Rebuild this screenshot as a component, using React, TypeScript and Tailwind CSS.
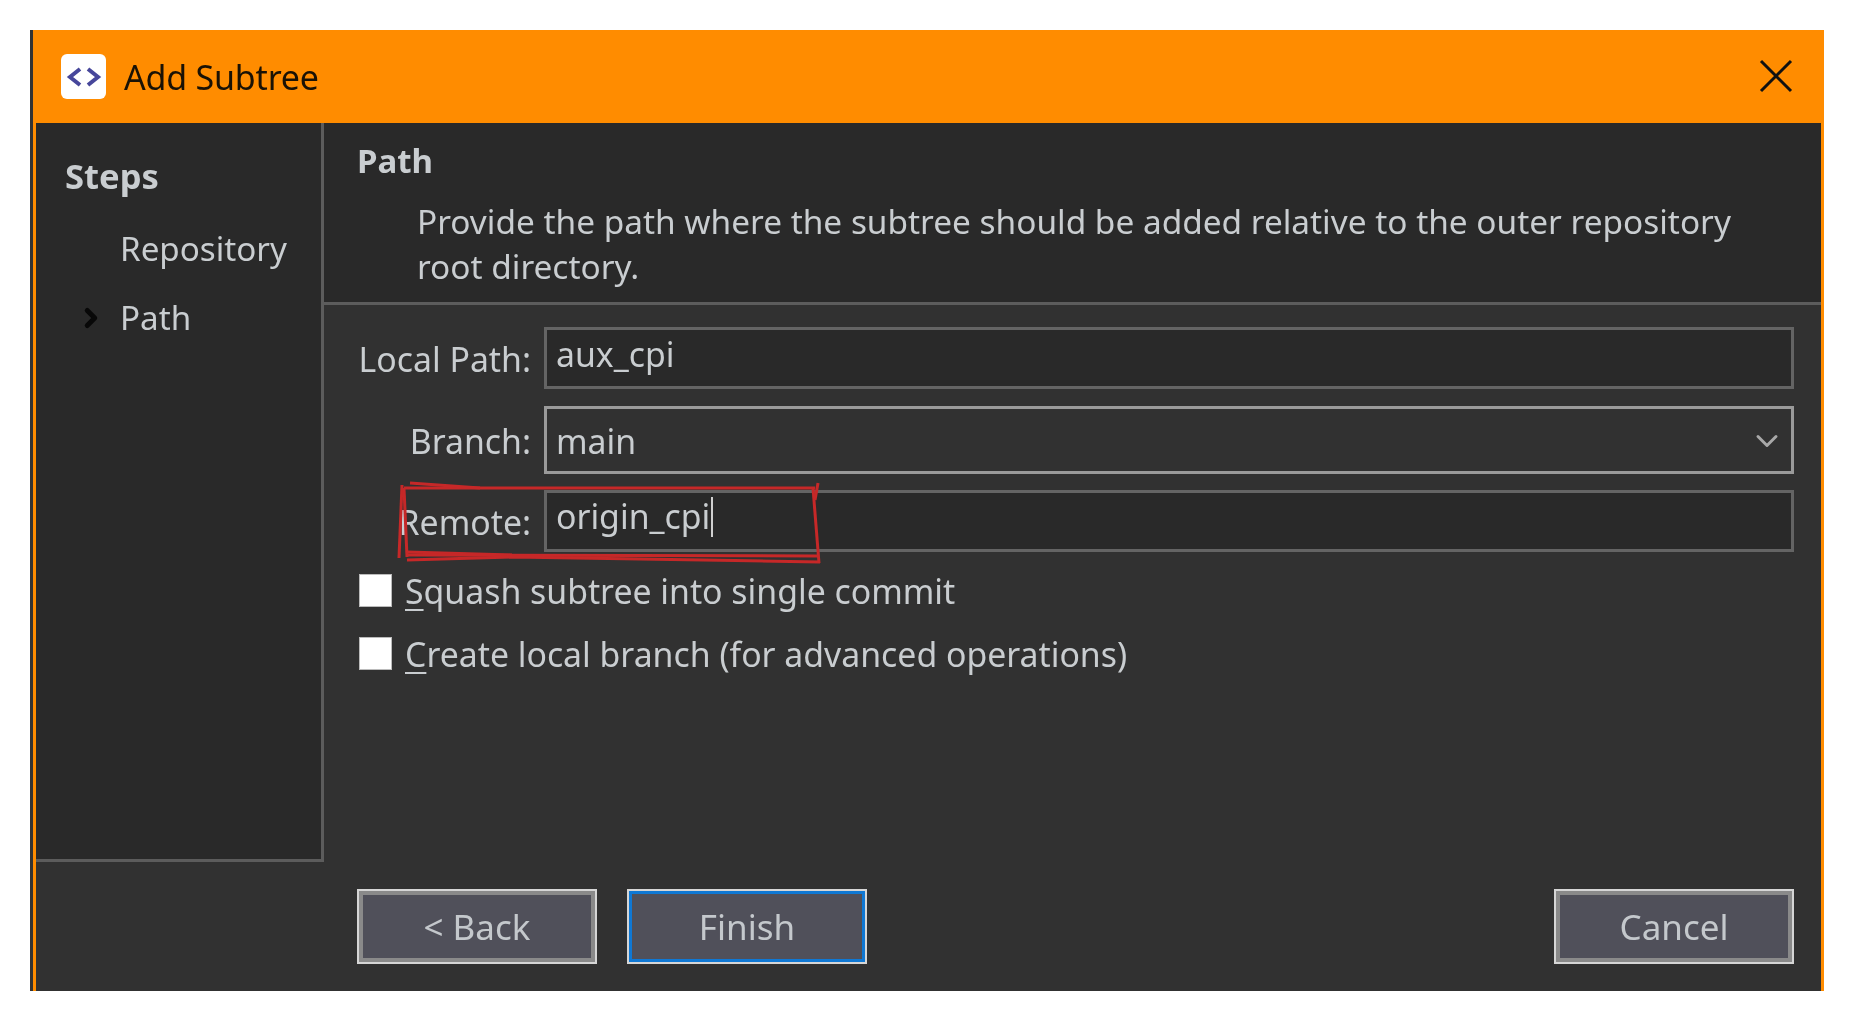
import { ChevronDown, ChevronRight } from 'lucide-react';

const font = 'font-["Noto_Sans","Open_Sans",sans-serif]';
const fieldText = 'text-[33.8px] leading-[44px] text-[#c9cdd0]';

const Field = ({ label, children }: { label: string; children: React.ReactNode }) => (
  <div className="flex items-center">
    <div className={`w-[220px] shrink-0 pr-[13px] pt-[2px] text-right ${fieldText}`}>{label}</div>
    {children}
  </div>
);

const Check = ({ mark, rest }: { mark: string; rest: string }) => (
  <div className="flex h-[33px] items-center gap-[13px]">
    <div className="h-[33px] w-[33px] bg-white border border-[#bbbbbb]" />
    <span className={fieldText}>
      <span className="underline underline-offset-[5px] decoration-2">{mark}</span>
      {rest}
    </span>
  </div>
);

const Btn = ({ label, focused }: { label: string; focused?: boolean }) => (
  <button
    className={`h-[75px] w-[240px] border-[2px] border-[#d6d6d6] bg-[#50505a] pt-[2px] text-[35px] text-[#c4c8cc] ${
      focused ? 'outline-[3px] -outline-offset-[5px] outline-[#0f78d4]' : 'outline-[4px] -outline-offset-[6px] outline-[#8a8a8a]'
    }`}
  >
    {label}
  </button>
);

export default function App() {
  return (
    <div className={`min-h-[1020px] bg-white pl-[30px] pt-[30px] ${font}`}>
      <div className="relative flex h-[961px] w-[1794px] flex-col border-l-[3px] border-l-[#333333] bg-[#ff8c00] blur-[0.5px]">
        {/* title bar */}
        <div className="flex h-[93px] shrink-0 items-center justify-between pl-[28px] pr-[31px]">
          <div className="flex items-center gap-[18px]">
            <div className="flex h-[45px] w-[45px] items-center justify-center rounded-[6px] bg-white">
              <svg width="36" height="24" viewBox="0 0 36 24" fill="none" stroke="#47479b" strokeWidth="4" strokeLinejoin="miter">
                <path d="M14 4 L4 12 L14 20" />
                <path d="M22 4 L32 12 L22 20" />
              </svg>
            </div>
            <span className="text-[34px] leading-[44px] tracking-[-0.2px] text-[#1a1205]">Add Subtree</span>
          </div>
          <svg width="34" height="34" viewBox="0 0 34 34" stroke="#111111" strokeWidth="3" className="mb-[2px]">
            <path d="M2 2 L32 32 M32 2 L2 32" />
          </svg>
        </div>

        {/* body */}
        <div className="ml-[3px] mr-[3px] flex min-h-0 flex-1 bg-[#313131]">
          <div className="w-[288px] shrink-0">
            <div className="h-[739px] border-b-[3px] border-r-[3px] border-[#5c5c5c] bg-[#292929] pl-[29px] pt-[31px]">
              <div className="text-[34.6px] font-bold leading-[44px] text-[#c9cdd0]">Steps</div>
              <div className="mt-[29px] pl-[55px] text-[33.2px] leading-[44px] text-[#c9cdd0]">Repository</div>
              <div className="relative mt-[25px] flex items-center">
                <ChevronRight size={30} strokeWidth={4} color="#080808" className="ml-[11px]" />
                <span className="ml-[14px] text-[33.2px] leading-[44px] text-[#c9cdd0]">Path</span>
              </div>
            </div>
          </div>

          <div className="flex min-w-0 flex-1 flex-col">
            <div className="h-[182px] shrink-0 border-b-[3px] border-[#5c5c5c] bg-[#292929] pl-[33px] pt-[16px]">
              <div className="text-[33px] font-bold leading-[44px] text-[#c9cdd0]">Path</div>
              <div className="mt-[16px] w-[1440px] pl-[60px] text-[33.4px] leading-[45px] text-[#c9cdd0]">
                Provide the path where the subtree should be added relative to the outer repository root directory.
              </div>
            </div>

            <div className="flex flex-col pr-[27px] pt-[22px]">
              <Field label="Local Path:">
                <div className={`h-[62px] flex-1 border-[3px] border-[#646464] bg-[#292929] pl-[9px] pt-[2px] ${fieldText}`}>aux_cpi</div>
              </Field>
              <div className="mt-[17px]">
                <Field label="Branch:">
                  <div className={`flex h-[68px] flex-1 items-center justify-between border-[3px] border-[#9a9a9a] pl-[9px] pr-[6px] pt-[1px] ${fieldText}`}>
                    main
                    <ChevronDown size={36} strokeWidth={2} color="#a8a8a8" />
                  </div>
                </Field>
              </div>
              <div className="mt-[16px]">
                <Field label="Remote:">
                  <div className={`flex h-[62px] flex-1 border-[3px] border-[#646464] bg-[#292929] pl-[9px] pt-[1px] ${fieldText}`}>
                    origin_cpi
                    <span className="ml-[1px] mt-[3px] h-[40px] w-[2px] bg-[#d0d0d0]" />
                  </div>
                </Field>
              </div>

              <div className="ml-[35px] mt-[22px] flex flex-col gap-[30px]">
                <Check mark="S" rest="quash subtree into single commit" />
                <Check mark="C" rest="reate local branch (for advanced operations)" />
              </div>
            </div>

            <div className="mt-auto flex items-center pb-[27px] pl-[33px] pr-[27px]">
              <Btn label="< Back" />
              <div className="ml-[30px]">
                <Btn label="Finish" focused />
              </div>
              <div className="ml-auto">
                <Btn label="Cancel" />
              </div>
            </div>
          </div>
        </div>

        {/* red pen annotation around the Remote row */}
        <svg className="absolute left-[363px] top-[450px]" width="430" height="90" viewBox="0 0 430 90" fill="none" stroke="#c62828" strokeWidth="3">
          <path d="M6 5 L3 78" />
          <path d="M8 8 L11 77" />
          <path d="M8 8 L419 8" />
          <path d="M14 3 L84 8" />
          <path d="M11 72 L116 75" />
          <path d="M11 75 L422 76" />
          <path d="M11 80 L117 77 L424 82" />
          <path d="M417 8 L423 83" />
          <path d="M422 3 L419 20" />
        </svg>
      </div>
    </div>
  );
}
